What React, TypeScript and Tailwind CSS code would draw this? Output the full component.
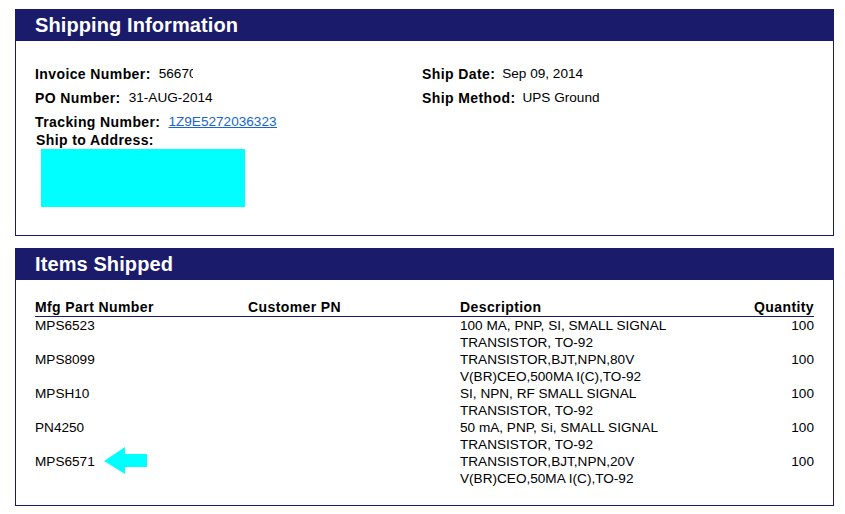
const items = [
  { part: "MPS6523", desc: ["100 MA, PNP, SI, SMALL SIGNAL", "TRANSISTOR, TO-92"], qty: "100" },
  { part: "MPS8099", desc: ["TRANSISTOR,BJT,NPN,80V", "V(BR)CEO,500MA I(C),TO-92"], qty: "100" },
  { part: "MPSH10", desc: ["SI, NPN, RF SMALL SIGNAL", "TRANSISTOR, TO-92"], qty: "100" },
  { part: "PN4250", desc: ["50 mA, PNP, Si, SMALL SIGNAL", "TRANSISTOR, TO-92"], qty: "100" },
  { part: "MPS6571", desc: ["TRANSISTOR,BJT,NPN,20V", "V(BR)CEO,50MA I(C),TO-92"], qty: "100", arrow: true },
];

function Panel({ title, children }: { title: string; children: React.ReactNode }) {
  return (
    <div className="ml-[15px] w-[819px] border border-[#1b1b6b] bg-white">
      <div className="h-[31px] bg-[#1b1b6b] pl-[19px] text-[20px] leading-[30px] font-bold tracking-[0.1px] text-white">
        {title}
      </div>
      {children}
    </div>
  );
}

function Arrow() {
  return (
    <svg width="43" height="28" viewBox="0 0 43 28" className="ml-[9px] shrink-0">
      <polygon points="0,14 21,0 21,7 43,7 43,20 21,20 21,27" fill="#00ffff" />
    </svg>
  );
}

const label = "font-bold text-[14px] tracking-[0.4px]";

export default function App() {
  return (
    <div className="min-h-[514px] w-[845px] bg-white pt-[9px] font-['Liberation_Sans',Arial,sans-serif] text-[13.6px] text-black">
      <Panel title="Shipping Information">
        <div className="grid h-[194px] grid-cols-[387px_1fr] pt-[21px] pl-[19px]">
          <div>
            <div className="flex h-[24px] items-center">
              <span className={label}>Invoice Number:</span>
              <span className="ml-[8px] inline-block w-[34px] overflow-hidden whitespace-nowrap">566701</span>
            </div>
            <div className="flex h-[24px] items-center">
              <span className={label}>PO Number:</span>
              <span className="ml-[8px]">31-AUG-2014</span>
            </div>
            <div className="flex h-[24px] items-center">
              <span className={`${label} tracking-[0.2px]`}>Tracking Number:</span>
              <a className="ml-[8px] inline-block w-[109px] overflow-hidden whitespace-nowrap text-[#1a66cc] underline">
                1Z9E52720363237
              </a>
            </div>
            <div className={`flex h-[13px] items-center pl-[1px] ${label}`}>Ship to Address:</div>
            <div className="mt-[2px] ml-[6px] h-[58px] w-[204px] bg-[#00ffff]" />
          </div>
          <div>
            <div className="flex h-[24px] items-center">
              <span className={label}>Ship Date:</span>
              <span className="ml-[7px]">Sep 09, 2014</span>
            </div>
            <div className="flex h-[24px] items-center">
              <span className={label}>Ship Method:</span>
              <span className="ml-[7px]">UPS Ground</span>
            </div>
          </div>
        </div>
      </Panel>
      <div className="h-[12px]" />
      <Panel title="Items Shipped">
        <div className="h-[225px] pt-[19px] pl-[19px]">
          <div className="w-[779px]">
            <div className={`grid h-[18px] grid-cols-[213px_212px_1fr_80px] items-end border-b border-[#1b1b6b] pb-[1px] leading-[15px] ${label}`}>
              <span>Mfg Part Number</span>
              <span>Customer PN</span>
              <span>Description</span>
              <span className="text-right">Quantity</span>
            </div>
            {items.map((it) => (
              <div key={it.part} className="grid grid-cols-[213px_212px_1fr_80px] leading-[17px]">
                <div className="flex h-[17px] items-start">
                  <span>{it.part}</span>
                  {it.arrow && <div className="-mt-[6px]"><Arrow /></div>}
                </div>
                <span />
                <div>
                  {it.desc.map((d) => (
                    <div key={d}>{d}</div>
                  ))}
                </div>
                <span className="text-right">{it.qty}</span>
              </div>
            ))}
          </div>
        </div>
      </Panel>
    </div>
  );
}
